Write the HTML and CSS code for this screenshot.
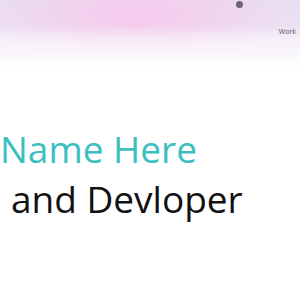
FILE: index.html
```html
<!DOCTYPE html>
<html lang="en">
<head>
  <meta charset="UTF-8" />
  <meta name="viewport" content="width=device-width, initial-scale=1" />
  <title>Portfolio</title>
  <link rel="stylesheet" href="styles.css">
</head>
<body>
  <header class="top">
    <span class="dot"></span>
    <nav class="nav">
      <a href="#">Work</a>
    </nav>
  </header>

  <section class="hero">
    <h1 class="name">Name Here</h1>
    <p class="role">and Devloper</p>
  </section>
</body>
</html>
```

FILE: styles.css
```css
html, body {
  margin: 0;
  padding: 0;
  background: #fff;
  overflow: hidden;
}
body {
  font-family: "Open Sans", "Noto Sans", sans-serif;
  width: 300px;
  height: 300px;
}
.top {
  position: relative;
  height: 80px;
  background:
    linear-gradient(to bottom, rgba(255, 255, 255, 0) 0, rgba(255, 255, 255, 0) 26px, rgba(255, 255, 255, 0.5) 40px, #fff 70px),
    radial-gradient(ellipse 150px 48px at 135px 16px, #f6c9ec, rgba(246, 201, 236, 0) 100%),
    linear-gradient(to bottom, #e9ddf2, #eee1f4 40px);
}
.dot {
  position: absolute;
  left: 236px;
  top: 1px;
  width: 7px;
  height: 7px;
  border-radius: 50%;
  background: #6b6670;
}
.nav {
  display: flex;
  justify-content: flex-end;
  padding-top: 27px;
  padding-right: 4px;
}
.nav a {
  font-size: 7px;
  color: #555;
  text-decoration: none;
}
.hero {
  padding-top: 44px;
}
.name,
.role {
  margin: 0;
  font-size: 37px;
  font-weight: 400;
  line-height: 50px;
  white-space: nowrap;
}
.name {
  color: #3dbfbf;
}
.role {
  color: #111;
  padding-left: 11px;
}
```
